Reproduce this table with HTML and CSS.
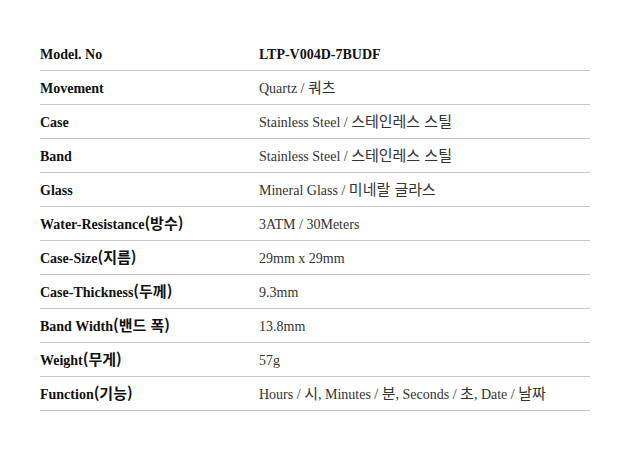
FILE: index.html
```html
<!DOCTYPE html>
<html lang="ko">
<head>
<meta charset="utf-8">
<link rel="stylesheet" href="styles.css">
</head>
<body>
<table class="spec">
  <tr><th>Model. No</th><td class="strong">LTP-V004D-7BUDF</td></tr>
  <tr><th>Movement</th><td>Quartz / <span class="ko">쿼츠</span></td></tr>
  <tr><th>Case</th><td>Stainless Steel / <span class="ko">스테인레스 스틸</span></td></tr>
  <tr><th>Band</th><td>Stainless Steel / <span class="ko">스테인레스 스틸</span></td></tr>
  <tr><th>Glass</th><td>Mineral Glass / <span class="ko">미네랄 글라스</span></td></tr>
  <tr><th>Water-Resistance<span class="ko">(방수)</span></th><td>3ATM / 30Meters</td></tr>
  <tr><th>Case-Size<span class="ko">(지름)</span></th><td>29mm x 29mm</td></tr>
  <tr><th>Case-Thickness<span class="ko">(두께)</span></th><td>9.3mm</td></tr>
  <tr><th>Band Width<span class="ko">(밴드 폭)</span></th><td>13.8mm</td></tr>
  <tr><th>Weight<span class="ko">(무게)</span></th><td>57g</td></tr>
  <tr><th>Function<span class="ko">(기능)</span></th><td>Hours / <span class="ko">시</span>, Minutes / <span class="ko">분</span>, Seconds / <span class="ko">초</span>, Date / <span class="ko">날짜</span></td></tr>
</table>
</body>
</html>
```
FILE: styles.css
```css
html, body {
  margin: 0;
  padding: 0;
  background: #fff;
}
.spec {
  margin: 37px 0 0 40px;
  width: 550px;
  border-collapse: collapse;
  font-family: "Liberation Serif", "Noto Sans CJK KR", serif;
  font-size: 14px;
  line-height: 18px;
  color: #333;
}
.spec th, .spec td {
  height: 31px;
  padding: 2px 0 0 0;
  border-bottom: 1px solid #c8c8c8;
  text-align: left;
  vertical-align: middle;
  white-space: nowrap;
}
.spec th {
  width: 219px;
  color: #111;
  font-weight: bold;
}
.spec td {
  color: #333;
}
.spec td.strong {
  font-weight: bold;
  color: #111;
}
.ko {
  font-family: "Noto Sans CJK KR", sans-serif;
  font-size: 15px;
  line-height: 1;
}
```
